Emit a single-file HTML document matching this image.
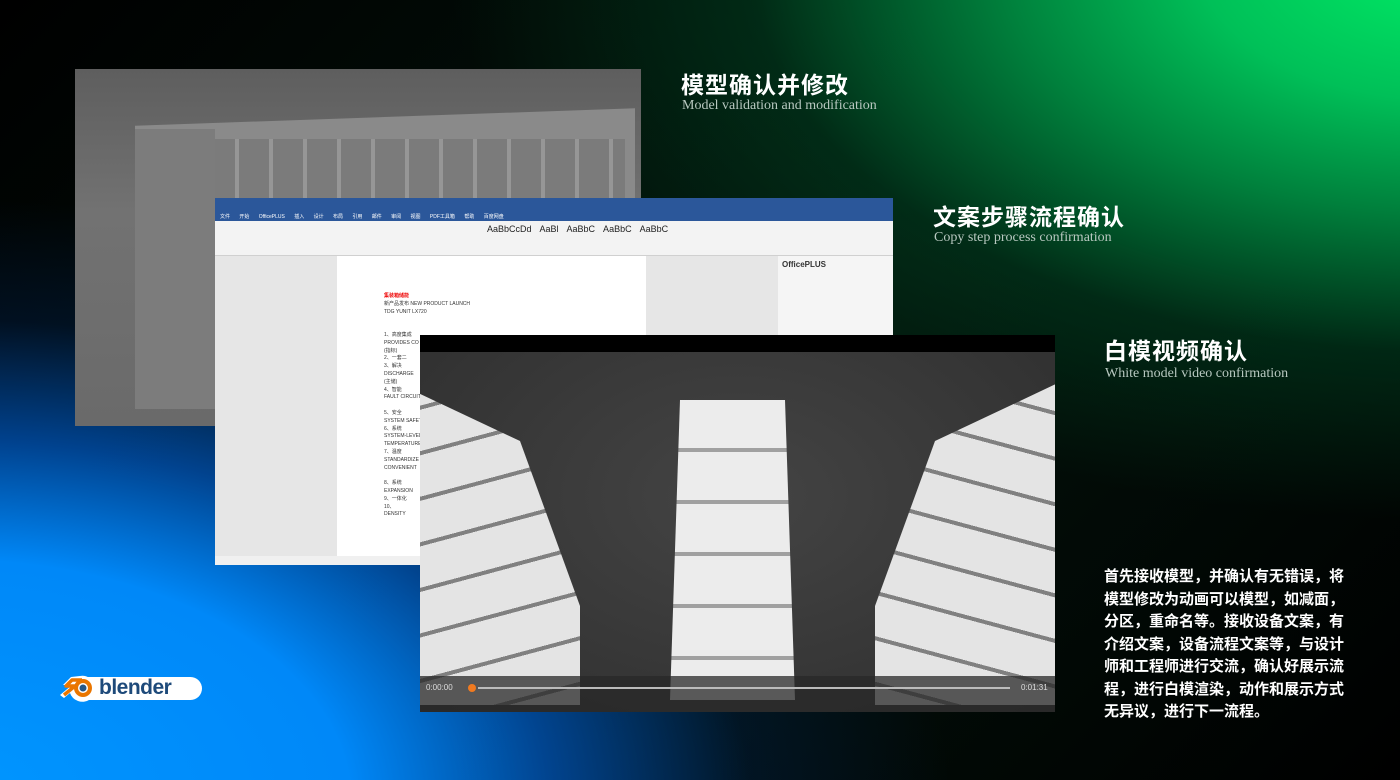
<!DOCTYPE html>
<html><head><meta charset="utf-8"><style>
*{margin:0;padding:0;box-sizing:border-box}
body{width:1400px;height:780px;overflow:hidden;position:relative;font-family:"Liberation Sans","Noto Sans CJK SC",sans-serif;
background:
radial-gradient(ellipse 1000px 560px at 1450px -40px,#00ee66 0%,#00c058 25%,#00803c 45%,rgba(0,60,30,.6) 70%,rgba(0,0,0,0) 100%),
radial-gradient(ellipse 1000px 600px at -50px 800px,#0096ff 0%,#0088f8 40%,rgba(0,90,200,.7) 60%,rgba(0,40,100,.3) 80%,rgba(0,0,0,0) 100%),
linear-gradient(135deg,#000 0%,#03140c 50%,#000 100%);}
.abs{position:absolute}
.t{color:#fff;font-weight:bold;font-size:23px;letter-spacing:1px}
.s{color:#b8c8c0;font-family:"Liberation Serif",serif;font-size:14px}
</style></head><body>
<div class="abs" style="left:75px;top:69px;width:566px;height:357px;background:linear-gradient(180deg,#5e5e5e,#727272 40%,#6a6a6a);overflow:hidden">
<div class="abs" style="left:60px;top:48px;width:500px;height:260px;background:#8a8a8a;transform:skewY(-2deg)"></div>
<div class="abs" style="left:130px;top:70px;width:420px;height:190px;background:repeating-linear-gradient(90deg,#777 0 30px,#999 30px 34px);opacity:.8"></div>
<div class="abs" style="left:60px;top:60px;width:80px;height:280px;background:#7c7c7c"></div>
</div>
<div class="abs" style="left:215px;top:198px;width:678px;height:367px;background:#e6e6e6;overflow:hidden;font-size:5px;color:#333">
<div style="height:12px;background:#2b579a"></div>
<div style="height:11px;background:#2b579a;color:#fff;font-size:5px;padding:3px 5px;word-spacing:8px">文件 开始 OfficePLUS 插入 设计 布局 引用 邮件 审阅 视图 PDF工具箱 帮助 百度网盘</div>
<div style="height:35px;background:#f3f3f3;border-bottom:1px solid #d0d0d0;position:relative">
<div class="abs" style="left:272px;top:3px;font-size:9px;color:#222;word-spacing:6px">AaBbCcDd AaBl AaBbC AaBbC AaBbC</div></div>
<div class="abs" style="left:122px;top:58px;width:309px;height:310px;background:#fff;padding:37px 47px;line-height:7.8px">
<div style="color:#e00;font-weight:bold">集装箱储能</div>新产品发布 NEW PRODUCT LAUNCH<br>TDG YUNIT LX720<br><br><br>1、高度集成<br>PROVIDES CO<br>(指标)<br>2、一套二<br>3、解决<br>DISCHARGE<br>(主储)<br>4、智能<br>FAULT CIRCUIT<br><br>5、安全<br>SYSTEM SAFET<br>6、系统<br>SYSTEM-LEVEL<br>TEMPERATURE<br>7、温度<br>STANDARDIZE<br>CONVENIENT<br><br>8、系统<br>EXPANSION<br>9、一体化<br>10、<br>DENSITY</div>
<div class="abs" style="left:563px;top:58px;width:115px;height:80px;background:#f5f5f5;font-size:8px;padding:4px;font-weight:bold">OfficePLUS</div>
<div class="abs" style="left:0;top:358px;width:678px;height:9px;background:#f0f0f0"></div>
</div>
<div class="abs" style="left:420px;top:335px;width:635px;height:377px;background:#383838;overflow:hidden">
<div style="height:17px;background:#000"></div>
<div class="abs" style="left:0;top:17px;width:635px;height:360px;background:radial-gradient(ellipse at 50% 40%,#444,#2e2e2e)"></div>
<div class="abs" style="left:250px;top:65px;width:125px;height:300px;background:repeating-linear-gradient(180deg,#ececec 0 48px,#a0a0a0 48px 52px);clip-path:polygon(8% 0,92% 0,100% 100%,0 100%)"></div>
<div class="abs" style="left:-40px;top:40px;width:200px;height:330px;background:repeating-linear-gradient(165deg,#e4e4e4 0 40px,#808080 40px 44px);clip-path:polygon(0 0,70% 20%,100% 70%,100% 100%,0 100%)"></div>
<div class="abs" style="left:455px;top:40px;width:200px;height:330px;background:repeating-linear-gradient(195deg,#e4e4e4 0 40px,#808080 40px 44px);clip-path:polygon(100% 0,30% 20%,0 70%,0 100%,100% 100%)"></div>
<div class="abs" style="left:0;top:341px;width:635px;height:36px;background:rgba(40,40,40,.75)"></div>
<div class="abs" style="left:6px;top:348px;color:#ddd;font-size:8px">0:00:00</div>
<div class="abs" style="left:48px;top:349px;width:8px;height:8px;border-radius:50%;background:#f07a20"></div>
<div class="abs" style="left:58px;top:352px;width:532px;height:2px;background:#bbb"></div>
<div class="abs" style="left:601px;top:348px;color:#ddd;font-size:8px">0:01:31</div>
</div>
<div class="abs t" style="left:681px;top:66px">模型确认并修改</div>
<div class="abs s" style="left:682px;top:98px">Model validation and modification</div>
<div class="abs t" style="left:933px;top:198px">文案步骤流程确认</div>
<div class="abs s" style="left:934px;top:230px">Copy step process confirmation</div>
<div class="abs t" style="left:1104px;top:332px">白模视频确认</div>
<div class="abs s" style="left:1105px;top:366px">White model video confirmation</div>
<div class="abs" style="left:1104px;top:566px;width:252px;color:#fff;font-size:15px;font-weight:bold;line-height:22.5px">首先接收模型，并确认有无错误，将模型修改为动画可以模型，如减面，分区，重命名等。接收设备文案，有介绍文案，设备流程文案等，与设计师和工程师进行交流，确认好展示流程，进行白模渲染，动作和展示方式无异议，进行下一流程。</div>
<div class="abs" style="left:72px;top:677px;width:130px;height:23px;background:#fff;border-radius:12px"></div>
<div class="abs" style="left:58px;top:667px;width:40px;height:38px">
<svg width="40" height="38" viewBox="0 0 40 38"><path d="M2 28 L14 18 L5 18 L13 10 L22 9 A13 13 0 1 1 20 34 A13 13 0 0 1 12 26 L6 31Z" fill="#fff"/><path d="M6 28 L17 19 L8 19 L14 13 L24 13" stroke="#ea7600" stroke-width="3.5" fill="none" stroke-linejoin="round"/><circle cx="25" cy="21" r="9" fill="#ea7600"/><circle cx="25" cy="21" r="5" fill="#fff"/><circle cx="25" cy="21" r="3.5" fill="#265787"/></svg></div>
<div class="abs" style="left:99px;top:676px;font-size:21px;font-weight:bold;color:#1e4a7a;letter-spacing:-0.5px">blender</div>
</body></html>
